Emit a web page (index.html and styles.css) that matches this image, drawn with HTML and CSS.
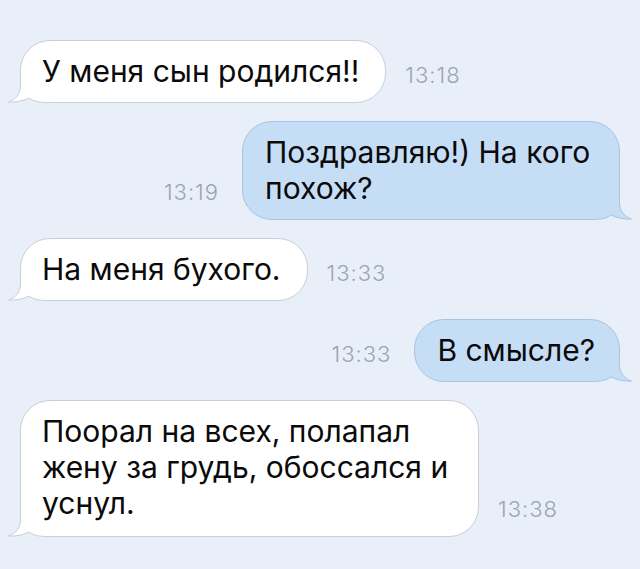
FILE: index.html
```html
<!DOCTYPE html>
<html>
<head>
  <title>Чат</title>
  <link rel="stylesheet" href="styles.css">
</head>
<body>
  <div class="chat">

    <div class="row in">
      <div class="bubble">
        <svg class="tail" width="40" height="32" viewBox="0 0 40 32">
          <path class="tail-fill" d="M12.5 0 L12.5 14 C12.5 23 8 28.5 0.5 31 C8 31.5 15 30 21 27 C25 30 30 31.5 40 31.5 L40 0 Z"/>
          <path class="tail-line" d="M12.5 0 L12.5 14 C12.5 23 8 28.5 0.5 31 C8 31.5 15 30 21 27 C25 30 30 31.5 40 31.5"/>
        </svg>
        <span class="text">У меня сын родился!!</span>
      </div>
      <span class="time">13:18</span>
    </div>

    <div class="row out">
      <span class="time">13:19</span>
      <div class="bubble">
        <svg class="tail" width="40" height="32" viewBox="0 0 40 32">
          <path class="tail-fill" d="M12.5 0 L12.5 14 C12.5 23 8 28.5 0.5 31 C8 31.5 15 30 21 27 C25 30 30 31.5 40 31.5 L40 0 Z"/>
          <path class="tail-line" d="M12.5 0 L12.5 14 C12.5 23 8 28.5 0.5 31 C8 31.5 15 30 21 27 C25 30 30 31.5 40 31.5"/>
        </svg>
        <span class="text">Поздравляю!) На кого похож?</span>
      </div>
    </div>

    <div class="row in">
      <div class="bubble">
        <svg class="tail" width="40" height="32" viewBox="0 0 40 32">
          <path class="tail-fill" d="M12.5 0 L12.5 14 C12.5 23 8 28.5 0.5 31 C8 31.5 15 30 21 27 C25 30 30 31.5 40 31.5 L40 0 Z"/>
          <path class="tail-line" d="M12.5 0 L12.5 14 C12.5 23 8 28.5 0.5 31 C8 31.5 15 30 21 27 C25 30 30 31.5 40 31.5"/>
        </svg>
        <span class="text">На меня бухого.</span>
      </div>
      <span class="time">13:33</span>
    </div>

    <div class="row out">
      <span class="time">13:33</span>
      <div class="bubble">
        <svg class="tail" width="40" height="32" viewBox="0 0 40 32">
          <path class="tail-fill" d="M12.5 0 L12.5 14 C12.5 23 8 28.5 0.5 31 C8 31.5 15 30 21 27 C25 30 30 31.5 40 31.5 L40 0 Z"/>
          <path class="tail-line" d="M12.5 0 L12.5 14 C12.5 23 8 28.5 0.5 31 C8 31.5 15 30 21 27 C25 30 30 31.5 40 31.5"/>
        </svg>
        <span class="text">В смысле?</span>
      </div>
    </div>

    <div class="row in">
      <div class="bubble tall">
        <svg class="tail" width="40" height="32" viewBox="0 0 40 32">
          <path class="tail-fill" d="M12.5 0 L12.5 14 C12.5 23 8 28.5 0.5 31 C8 31.5 15 30 21 27 C25 30 30 31.5 40 31.5 L40 0 Z"/>
          <path class="tail-line" d="M12.5 0 L12.5 14 C12.5 23 8 28.5 0.5 31 C8 31.5 15 30 21 27 C25 30 30 31.5 40 31.5"/>
        </svg>
        <span class="text">Поорал на всех, полапал жену за грудь, обоссался и уснул.</span>
      </div>
      <span class="time">13:38</span>
    </div>

  </div>
</body>
</html>
```

FILE: styles.css
```css
/* Page */
body {
  margin: 0;
  background-color: #e8eff9;
  font-family: Inter, "Noto Sans", sans-serif;
}

/* Message list */
.chat {
  display: flex;
  flex-direction: column;
  gap: 18px;
  padding: 40px 20px 30px 20px;
}

/* One message with its time */
.row {
  display: flex;
  align-items: flex-end;
}

.row.out {
  justify-content: flex-end;
}

/* Speech bubble */
.bubble {
  position: relative;
  padding: 12px 26px 13px 21px;
  border-radius: 30px;
  font-size: 30px;
  line-height: 36px;
  color: #0a0a0a;
  background-color: #fff;
  border: 1px solid #c9ced7;
}

.bubble .text {
  position: relative;
}

.bubble.tall {
  padding-bottom: 15px;
}

.row.in .bubble {
  max-width: 410px;
}

.row.out .bubble {
  max-width: 330px;
  padding: 12px 24px 13px 22px;
  background-color: #c6ddf6;
  border-color: #a9c3e3;
}

/* Bubble tail */
.tail {
  position: absolute;
  bottom: -1px;
  left: -13px;
}

.tail-fill {
  fill: #fff;
}

.tail-line {
  fill: none;
  stroke: #c9ced7;
  stroke-width: 1;
}

.row.out .tail {
  left: auto;
  right: -13px;
  transform: scaleX(-1);
}

.row.out .tail-fill {
  fill: #c6ddf6;
}

.row.out .tail-line {
  stroke: #a9c3e3;
}

/* Time stamp */
.time {
  margin-bottom: 16px;
  font-size: 22px;
  line-height: 24px;
  letter-spacing: 1px;
  color: #9ca4ae;
  font-weight: 300;
}

.row.in .time {
  margin-left: 19px;
}

.row.out .time {
  margin-right: 23px;
}
```
